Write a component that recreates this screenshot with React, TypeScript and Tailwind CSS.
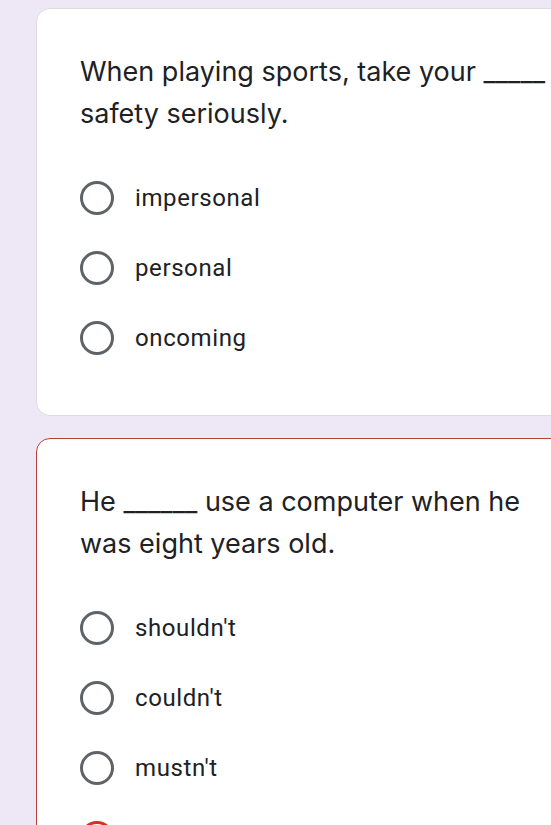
import React from "react";

type Question = {
  lines: string[];
  options: string[];
  selected?: number;
  wrong?: boolean;
};

const questions: Question[] = [
  {
    lines: ["When playing sports, take your _____", "safety seriously."],
    options: ["impersonal", "personal", "oncoming"],
  },
  {
    lines: ["He ______ use a computer when he", "was eight years old."],
    options: ["shouldn't", "couldn't", "mustn't", ""],
    selected: 3,
    wrong: true,
  },
];

function Radio({ selected, wrong }: { selected?: boolean; wrong?: boolean }) {
  return (
    <div
      className={`w-[34px] h-[34px] shrink-0 rounded-full border-[3px] flex items-center justify-center ${
        wrong ? "border-[#d93025]" : "border-[#5f6368]"
      }`}
    >
      {selected && (
        <div
          className={`w-[17px] h-[17px] rounded-full ${
            wrong ? "bg-[#d93025]" : "bg-[#673ab7]"
          }`}
        />
      )}
    </div>
  );
}

function QuestionCard({ q }: { q: Question }) {
  return (
    <div
      className={`w-[600px] shrink-0 rounded-[14px] border bg-white pl-[43px] pt-[42px] pb-[42px] ${
        q.wrong ? "border-[#b3423c]" : "border-[#dadce0]"
      }`}
    >
      <div
        className="text-[27px] leading-[42px] text-[#202124] whitespace-nowrap"
        style={{ fontFamily: "Inter, 'Open Sans', sans-serif" }}
      >
        {q.lines.map((line, i) => (
          <div key={i}>{line}</div>
        ))}
      </div>
      <div className="mt-[28px] flex flex-col">
        {q.options.map((opt, i) => (
          <div key={i} className="h-[70px] flex items-center gap-[21px]">
            <Radio selected={q.selected === i} wrong={q.wrong && q.selected === i} />
            {opt && (
              <span className="text-[24px] tracking-[0.6px] text-[#202124] font-['Roboto',sans-serif]">
                {opt}
              </span>
            )}
          </div>
        ))}
      </div>
    </div>
  );
}

export default function App() {
  return (
    <div className="min-h-screen w-full overflow-hidden bg-[#ede7f6] pt-2 pl-9 flex flex-col gap-[22px]">
      {questions.map((q, i) => (
        <QuestionCard key={i} q={q} />
      ))}
    </div>
  );
}
